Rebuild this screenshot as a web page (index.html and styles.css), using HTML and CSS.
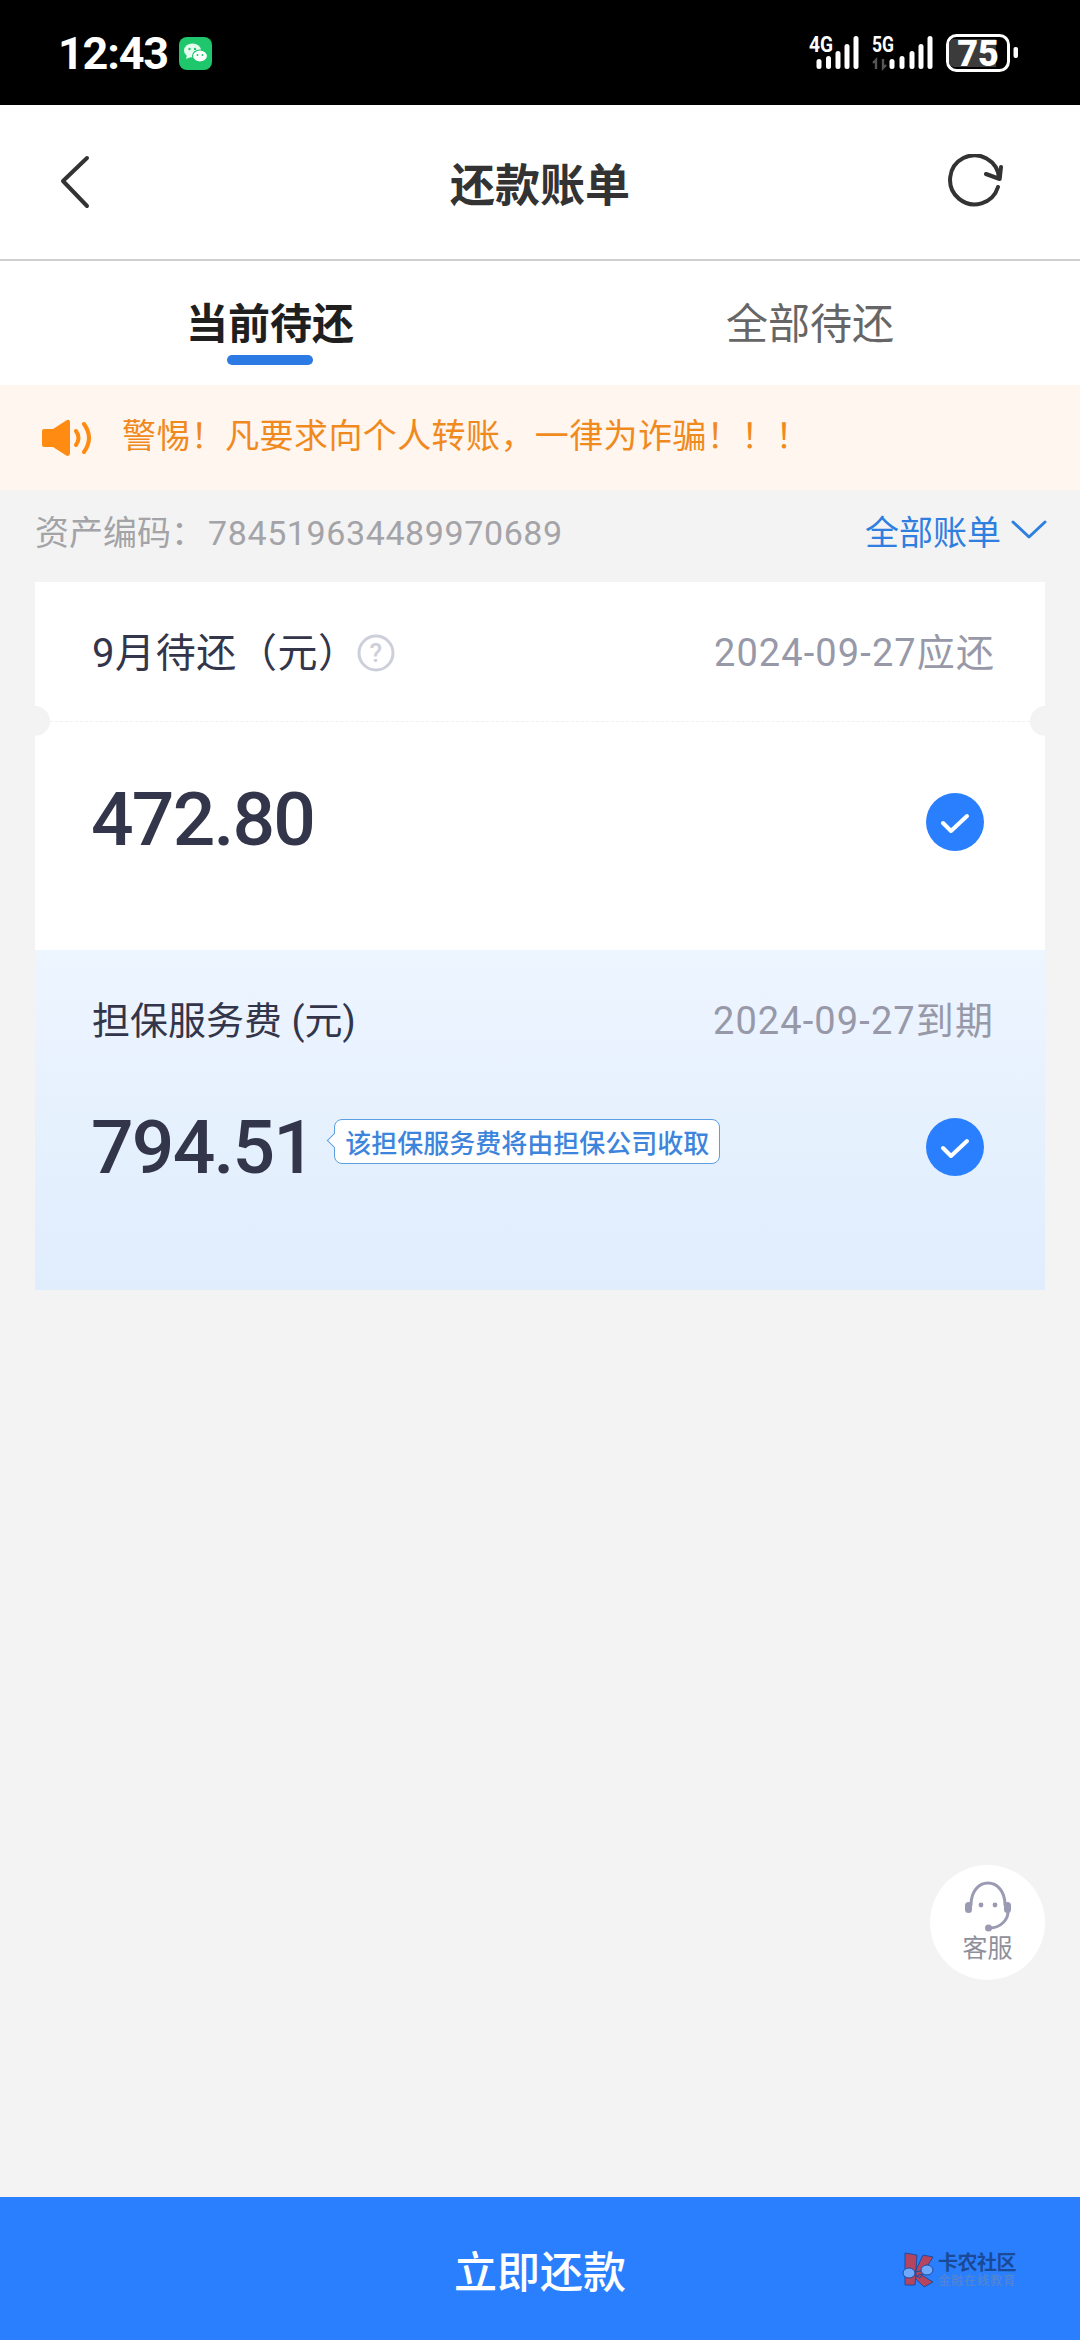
FILE: index.html
```html
<!DOCTYPE html>
<html lang="zh-CN">
<head>
    <meta charset="UTF-8">
    <meta name="viewport" content="width=device-width, initial-scale=1.0">
    <title>还款账单</title>
    <link rel="stylesheet" href="styles.css">
</head>
<body>
    <div class="status-bar">
        <div class="status-left">
            <span class="clock">12:43</span>
            <svg class="wechat" width="33" height="33" viewBox="0 0 33 33">
                <rect width="33" height="33" rx="8" fill="#1ec76c"/>
                <ellipse cx="13.5" cy="13.5" rx="8.5" ry="7" fill="#e6fbef"/>
                <path d="M8 18l-1 4 5-2z" fill="#e6fbef"/>
                <ellipse cx="21" cy="19" rx="7.5" ry="6" fill="#fff" stroke="#1ec76c" stroke-width="1.2"/>
                <circle cx="10.5" cy="12" r="1.2" fill="#1ec76c"/><circle cx="16" cy="12" r="1.2" fill="#1ec76c"/>
                <circle cx="18.5" cy="18" r="1" fill="#1ec76c"/><circle cx="23.5" cy="18" r="1" fill="#1ec76c"/>
            </svg>
        </div>
        <svg class="status-icons" width="225" height="50" viewBox="0 0 225 50">
            <text x="9" y="23" class="net" textLength="24" lengthAdjust="spacingAndGlyphs">4G</text>
            <g fill="#fff">
                <rect x="16.5" y="30" width="5" height="10" rx="2.5"/>
                <rect x="26" y="27" width="5" height="13" rx="2.5"/>
                <rect x="35.5" y="22" width="5" height="18" rx="2.5"/>
                <rect x="44.5" y="15" width="5" height="25" rx="2.5"/>
                <rect x="53.5" y="7" width="5" height="33" rx="2.5"/>
            </g>
            <text x="72" y="23" class="net" textLength="22" lengthAdjust="spacingAndGlyphs">5G</text>
            <path d="M76 40v-9l-3 3M83 30v9l3-3" fill="none" stroke="#555" stroke-width="2.4"/>
            <g fill="#fff">
                <rect x="89.5" y="30" width="5" height="10" rx="2.5"/>
                <rect x="99.5" y="27" width="5" height="13" rx="2.5"/>
                <rect x="109.5" y="22" width="5" height="18" rx="2.5"/>
                <rect x="118.5" y="15" width="5" height="25" rx="2.5"/>
                <rect x="127.5" y="7" width="5" height="33" rx="2.5"/>
            </g>
            <rect x="147.5" y="6.5" width="61" height="35" rx="9" fill="none" stroke="#fff" stroke-width="3"/>
            <path d="M154 10h42v28h-42a5 5 0 0 1-5-5v-18a5 5 0 0 1 5-5z" fill="#3b3b3b"/>
            <text x="178" y="36.5" class="batt">75</text>
            <rect x="213.5" y="18" width="4.5" height="11" rx="2" fill="#fff"/>
        </svg>
    </div>

    <header class="nav">
        <svg width="34" height="54" viewBox="0 0 34 54"><path d="M29 3L5 26l24 25" fill="none" stroke="#333" stroke-width="4" stroke-linecap="round" stroke-linejoin="round"/></svg>
        <h1>还款账单</h1>
        <svg class="nav-refresh" width="60" height="56" viewBox="0 0 60 56"><path d="M52 33A24.5 24.5 0 1 1 53 24M55 13L53.7 25 40 20" fill="none" stroke="#333" stroke-width="4" stroke-linecap="round" stroke-linejoin="round"/></svg>
    </header>

    <nav class="tabs">
        <div class="tab active">当前待还</div>
        <div class="tab">全部待还</div>
    </nav>

    <div class="notice">
        <svg width="52" height="38" viewBox="0 0 52 38">
            <path d="M3 10h9L26 1q3-1 3 3v30q0 3-3 3L12 28H3q-2 0-2-2V12q0-2 2-2z" fill="#ff8b12"/>
            <path d="M35 12q5 7 0 14M43 5q10 14 0 28" fill="none" stroke="#ff8b12" stroke-width="4" stroke-linecap="round"/>
        </svg>
        <span>警惕！凡要求向个人转账，一律为诈骗！！！</span>
    </div>

    <main class="content">
        <div class="meta">
            <span class="asset">资产编码：<span class="num">784519634489970689</span></span>
            <span class="all-bills">全部账单
                <svg width="36" height="20" viewBox="0 0 36 20"><path d="M2 2l16 15L34 2" fill="none" stroke="#2f7fe0" stroke-width="3" stroke-linecap="round" stroke-linejoin="round"/></svg>
            </span>
        </div>

        <section class="card">
            <div class="bill-top">
                <div class="bill-name month">
                    <span>9月待还（元）</span>
                    <svg width="38" height="38" viewBox="0 0 38 38"><circle cx="19" cy="19" r="17" fill="none" stroke="#cdd0da" stroke-width="3"/><text x="19" y="28" class="help">?</text></svg>
                </div>
                <span class="date">2024-09-27应还</span>
            </div>
            <div class="notch-left"></div>
            <div class="notch-right"></div>
            <div class="bill-main">
                <span class="amount">472.80</span>
                <svg class="check" width="58" height="58" viewBox="0 0 58 58"><circle cx="29" cy="29" r="29" fill="#2a7fff"/><path d="M17 30l8 8 16-15" fill="none" stroke="#fff" stroke-width="4" stroke-linecap="round" stroke-linejoin="round"/></svg>
            </div>

            <div class="guarantee">
                <div class="guarantee-top">
                    <span class="bill-name">担保服务费 (元)</span>
                    <span class="date">2024-09-27到期</span>
                </div>
                <div class="guarantee-main">
                    <span class="amount">794.51</span>
                    <span class="bubble">该担保服务费将由担保公司收取</span>
                    <svg class="check" width="58" height="58" viewBox="0 0 58 58"><circle cx="29" cy="29" r="29" fill="#2a7fff"/><path d="M17 30l8 8 16-15" fill="none" stroke="#fff" stroke-width="4" stroke-linecap="round" stroke-linejoin="round"/></svg>
                </div>
            </div>
        </section>

        <div class="service">
            <svg width="48" height="52" viewBox="0 0 48 52">
                <path d="M7 24C7 10 15 2 24 2s17 8 17 22M44 31c0 8-8 16-18 16" fill="none" stroke="#9a9ab2" stroke-width="3" stroke-linecap="round"/>
                <rect x="1" y="21" width="7" height="11" rx="3.5" fill="#9a9ab2"/>
                <rect x="40" y="21" width="7" height="11" rx="3.5" fill="#9a9ab2"/>
                <circle cx="24.5" cy="47" r="3.5" fill="#9a9ab2"/>
                <circle cx="17" cy="24" r="2.4" fill="#9a9ab2"/><circle cx="31" cy="24" r="2.4" fill="#9a9ab2"/>
            </svg>
            <span>客服</span>
        </div>
    </main>

    <footer class="pay-btn">
        <span>立即还款</span>
        <div class="watermark">
            <svg width="36" height="36" viewBox="0 0 36 36">
                <path d="M5 1l12 2-2 30H5zM23 3l10 2-13 21-6-4zM20 22l13 8-9 5-9-9z" fill="#b5445f" stroke="#1f4c9c" stroke-width="1"/>
                <ellipse cx="9" cy="21" rx="6" ry="5" fill="#6fa8ff" stroke="#1f4c9c" stroke-width="1"/>
                <ellipse cx="27" cy="18" rx="6" ry="5" fill="#6fa8ff" stroke="#1f4c9c" stroke-width="1"/>
                <path d="M15 20l6-1" stroke="#1f4c9c" stroke-width="1"/>
            </svg>
            <div class="wm-text">
                <b>卡农社区</b>
                <small>金融在线教育</small>
            </div>
        </div>
    </footer>
</body>
</html>
```

FILE: styles.css
```css
* { box-sizing: border-box; }
body { margin: 0; width: 1080px; height: 2340px; display: flex; flex-direction: column; background-color: #f3f3f3; font-family: Roboto, "Noto Sans CJK SC", sans-serif; color: #333; overflow: hidden; }

.status-bar { height: 105px; flex: none; background-color: #000; display: flex; justify-content: space-between; align-items: center; padding: 2px 55px 0 58px; }
.status-left { display: flex; align-items: center; gap: 11px; }
.clock { color: #fff; font-size: 45px; font-weight: 700; letter-spacing: -1.2px; line-height: 1; }
.net { fill: #fff; font-family: Roboto, sans-serif; font-size: 22px; font-weight: 700; }
.batt { fill: #fff; font-family: Roboto, sans-serif; font-size: 36px; font-weight: 900; text-anchor: middle; }

.nav { height: 156px; flex: none; background-color: #fff; border-bottom: 2px solid #d0d0d0; display: grid; grid-template-columns: 1fr auto 1fr; align-items: center; padding: 0 58px; }
.nav h1 { margin: 0; font-size: 45px; font-weight: 700; color: #333; }
.nav-refresh { justify-self: end; margin-right: 16px; }

.tabs { height: 124px; flex: none; background-color: #fff; display: flex; }
.tab { width: 540px; display: flex; justify-content: center; padding-top: 35px; font-size: 42px; color: #666; line-height: 58px; position: relative; }
.tab.active { color: #1f1f1f; font-weight: 700; }
.tab.active::after { content: ""; position: absolute; left: 227px; top: 94px; width: 86px; height: 10px; border-radius: 5px; background-color: #2c7be5; }

.notice { height: 105px; flex: none; background-color: #fff6ef; display: flex; align-items: center; gap: 29px; padding: 0 0 8px 41px; font-size: 34px; letter-spacing: 0.4px; color: #f08a1e; }
.notice svg { margin-top: 8px; }

.content { flex: 1; padding: 0 35px; position: relative; }
.meta { height: 92px; display: flex; justify-content: space-between; align-items: center; padding-bottom: 12px; font-size: 34px; }
.asset { color: #a3a3a8; }
.asset .num { letter-spacing: 0.6px; margin-left: 3px; }
.all-bills { color: #2f7fe0; display: flex; align-items: center; gap: 10px; margin-right: -2px; }

.card { background-color: #fff; position: relative; }
.bill-top { height: 140px; display: flex; justify-content: space-between; align-items: center; padding: 0 50px 4px 57px; border-bottom: 1px dashed #f0f0f0; }
.bill-name { display: flex; align-items: center; gap: 8px; font-size: 38px; color: #33364a; }
.bill-name.month { font-size: 40px; letter-spacing: 0.6px; }
.bill-name svg { margin-top: 6px; margin-left: -10px; }
.help { fill: #cdd0da; font-family: Roboto, sans-serif; font-size: 26px; font-weight: 500; text-anchor: middle; }
.date { font-size: 38px; color: #9899a8; letter-spacing: 1.1px; }
.notch-left, .notch-right { position: absolute; top: 124px; width: 30px; height: 30px; border-radius: 50%; background-color: #f3f3f3; }
.notch-left { left: -15px; }
.notch-right { right: -15px; }

.bill-main { height: 228px; display: flex; justify-content: space-between; align-items: flex-start; padding: 68px 61px 0 56px; }
.bill-main .check { margin-top: 3px; }
.amount { font-size: 75px; font-weight: 500; letter-spacing: -1.8px; color: #33364a; line-height: 58px; }
.check { flex: none; }

.guarantee { height: 340px; background: linear-gradient(180deg, #edf5ff, #e0edfd); padding: 0 51px 0 56px; }
.guarantee-top { height: 90px; padding-top: 44px; padding-left: 1px; display: flex; justify-content: space-between; align-items: center; }
.guarantee-main { display: flex; align-items: center; padding: 78px 10px 0 0; }
.guarantee-main .check { margin-left: auto; }
.bubble { margin-left: 20px; height: 45px; padding: 0 10px; display: flex; align-items: center; background-color: #fff; border: 1.5px solid #5b9fe0; border-radius: 8px; font-size: 26px; font-weight: 500; white-space: nowrap; color: #3d85dc; position: relative; margin-top: -11px; }
.bubble::before { content: ""; position: absolute; left: -6px; top: 15px; width: 10px; height: 10px; background-color: #fff; border-left: 1.5px solid #5b9fe0; border-bottom: 1.5px solid #5b9fe0; transform: rotate(45deg); }

.service { position: absolute; left: 930px; top: 1375px; width: 115px; height: 115px; border-radius: 50%; background-color: #fff; display: flex; flex-direction: column; align-items: center; padding-top: 16px; font-size: 25px; color: #8f8f9c; line-height: 28px; }
.service span { margin-top: 2px; }

.pay-btn { height: 143px; flex: none; background-color: #2a7fff; display: flex; justify-content: center; align-items: center; font-size: 43px; font-weight: 500; color: #fff; position: relative; }
.watermark { position: absolute; left: 900px; top: 55px; display: flex; align-items: center; gap: 2px; }
.wm-text { display: flex; flex-direction: column; line-height: 1; }
.wm-text b { font-size: 20px; color: #1a4a96; letter-spacing: -0.5px; }
.wm-text small { font-size: 12px; font-weight: 400; color: #5a86c8; margin-top: 2px; letter-spacing: 1px; }
```
